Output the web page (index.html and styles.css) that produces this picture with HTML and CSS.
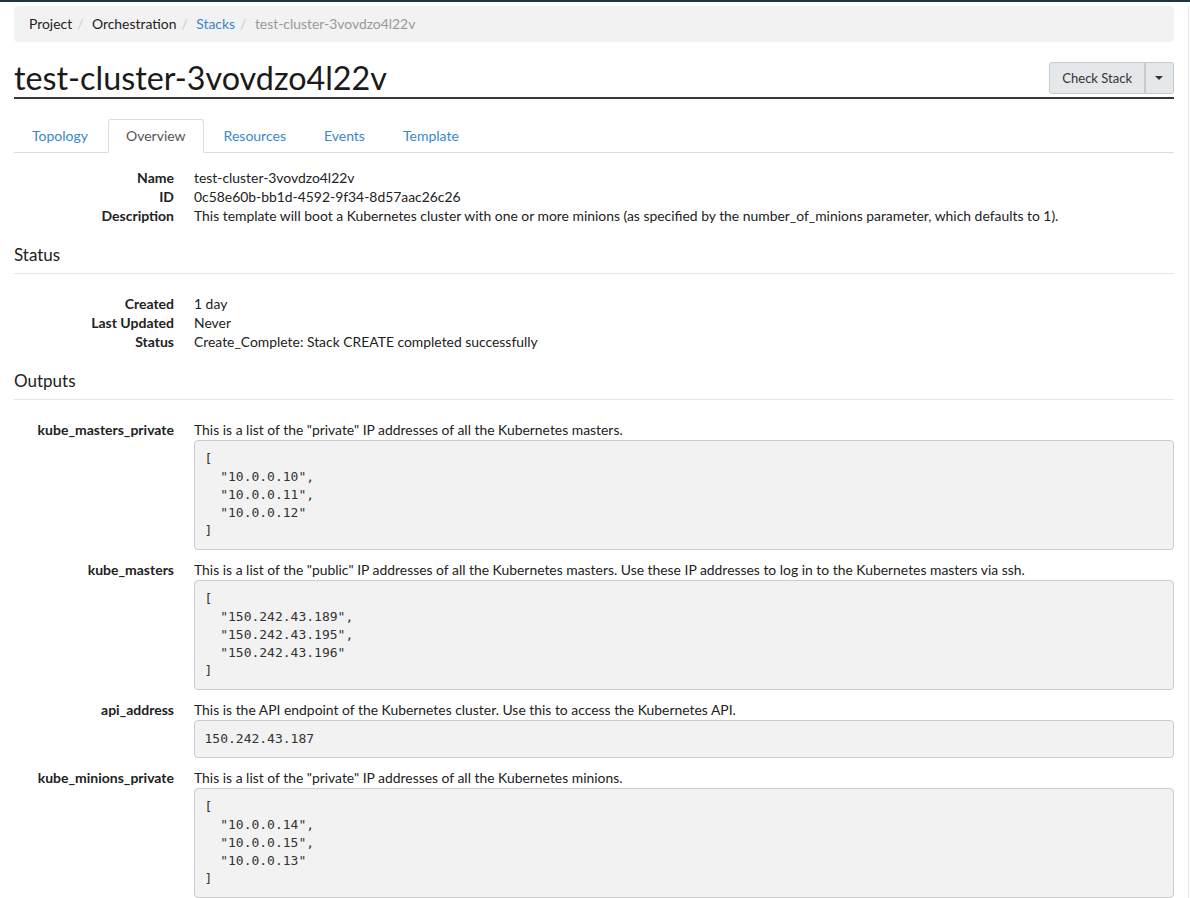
FILE: index.html
```html
<!DOCTYPE html>
<html lang="en">
<head>
<meta charset="utf-8">
<title>Stack Details - test-cluster-3vovdzo4l22v</title>
<link rel="stylesheet" href="styles.css">
</head>
<body>
<div class="topbar"></div>
<div class="page">
  <ol class="breadcrumb">
    <li>Project</li>
    <li>Orchestration</li>
    <li><a href="#">Stacks</a></li>
    <li class="active">test-cluster-3vovdzo4l22v</li>
  </ol>

  <div class="page-header">
    <h1 class="page-title">test-cluster-3vovdzo4l22v</h1>
    <div class="btn-group">
      <button class="btn btn-main" type="button">Check Stack</button>
      <button class="btn btn-toggle" type="button"><span class="caret"></span></button>
    </div>
  </div>

  <ul class="nav-tabs">
    <li><a href="#">Topology</a></li>
    <li class="active"><a href="#">Overview</a></li>
    <li><a href="#">Resources</a></li>
    <li><a href="#">Events</a></li>
    <li><a href="#">Template</a></li>
  </ul>

  <dl class="dl-horizontal overview">
    <dt>Name</dt>
    <dd>test-cluster-3vovdzo4l22v</dd>
    <dt>ID</dt>
    <dd>0c58e60b-bb1d-4592-9f34-8d57aac26c26</dd>
    <dt>Description</dt>
    <dd>This template will boot a Kubernetes cluster with one or more minions (as specified by the number_of_minions parameter, which defaults to 1).</dd>
  </dl>

  <h4 class="section-title">Status</h4>
  <dl class="dl-horizontal">
    <dt>Created</dt>
    <dd>1 day</dd>
    <dt>Last Updated</dt>
    <dd>Never</dd>
    <dt>Status</dt>
    <dd>Create_Complete: Stack CREATE completed successfully</dd>
  </dl>

  <h4 class="section-title">Outputs</h4>
  <dl class="dl-horizontal outputs">
    <dt>kube_masters_private</dt>
    <dd>
      <div class="out-desc">This is a list of the "private" IP addresses of all the Kubernetes masters.</div>
<pre>[
  "10.0.0.10",
  "10.0.0.11",
  "10.0.0.12"
]</pre>
    </dd>
    <dt>kube_masters</dt>
    <dd>
      <div class="out-desc">This is a list of the "public" IP addresses of all the Kubernetes masters. Use these IP addresses to log in to the Kubernetes masters via ssh.</div>
<pre>[
  "150.242.43.189",
  "150.242.43.195",
  "150.242.43.196"
]</pre>
    </dd>
    <dt>api_address</dt>
    <dd>
      <div class="out-desc">This is the API endpoint of the Kubernetes cluster. Use this to access the Kubernetes API.</div>
<pre>150.242.43.187</pre>
    </dd>
    <dt>kube_minions_private</dt>
    <dd>
      <div class="out-desc">This is a list of the "private" IP addresses of all the Kubernetes minions.</div>
<pre>[
  "10.0.0.14",
  "10.0.0.15",
  "10.0.0.13"
]</pre>
    </dd>
  </dl>
</div>
</body>
</html>
```
FILE: styles.css
```css
* {
  box-sizing: border-box;
}

html, body {
  margin: 0;
  padding: 0;
  background: #fff;
}

body {
  font-family: Lato, "Open Sans", "Liberation Sans", sans-serif;
  font-size: 13px;
  line-height: 19px;
  color: #222;
  overflow: hidden;
}

a {
  color: #3a87cd;
  text-decoration: none;
}

.topbar {
  height: 2px;
  background: #1c3540;
}

.page {
  width: 1189px;
  min-height: 896px;
  padding: 0 14px;
  border-right: 1px solid #e3e3e3;
}

/* breadcrumb */
.breadcrumb {
  list-style: none;
  margin: 4px 0 0;
  padding: 8px 15px;
  line-height: 20px;
  font-size: 13.9px;
  background: #f2f2f2;
  border-radius: 4px;
  display: flex;
  color: #222;
}

.breadcrumb li + li::before {
  content: "/\00a0";
  padding: 0 5px;
  color: #ccc;
}

.breadcrumb .active {
  color: #999;
}

/* page header */
.page-header {
  margin-top: 20px;
  padding-bottom: 3px;
  border-bottom: 2px solid #3b3530;
  display: flex;
  justify-content: space-between;
  align-items: flex-start;
}

.page-title {
  margin: 0;
  font-size: 32.3px;
  line-height: 32px;
  font-weight: 400;
  color: #1a1a1a;
}

.btn-group {
  display: flex;
}

.btn {
  font-family: inherit;
  font-size: 13px;
  line-height: 18px;
  height: 32px;
  color: #333;
  background: #e5e8eb;
  border: 1px solid #c8cacc;
  margin: 0;
  cursor: pointer;
}

.btn-main {
  padding: 6px 12px;
  border-radius: 3px 0 0 3px;
}

.btn-toggle {
  padding: 0 10px;
  border-left: 0;
  border-radius: 0 3px 3px 0;
  display: flex;
  align-items: center;
  box-shadow: inset 1px 0 0 #c8cacc;
}

.caret {
  display: inline-block;
  width: 0;
  height: 0;
  border-top: 4px solid #333;
  border-left: 4px solid transparent;
  border-right: 4px solid transparent;
}

/* tabs */
.nav-tabs {
  list-style: none;
  margin: 20px 0 0;
  padding: 0;
  display: flex;
  border-bottom: 1px solid #ddd;
  font-size: 14px;
}

.nav-tabs li {
  margin-bottom: -1px;
  margin-right: 2px;
}

.nav-tabs a {
  display: block;
  padding: 6px 17px 6px;
  line-height: 20px;
  border: 1px solid transparent;
  border-radius: 3px 3px 0 0;
}

.nav-tabs .active a {
  color: #555;
  background: #fff;
  border-color: #ddd;
  border-bottom-color: #fff;
}

/* description lists */
.dl-horizontal {
  display: grid;
  grid-template-columns: 160px 1fr;
  column-gap: 20px;
  margin: 0;
  font-size: 13.9px;
}

.dl-horizontal dt {
  font-size: 14px;
  font-weight: 700;
  text-align: right;
  white-space: nowrap;
}

.dl-horizontal dd {
  margin: 0;
}

.overview {
  margin-top: 15px;
}

.section-title {
  margin: 20px 0 20px;
  padding-bottom: 9px;
  font-size: 17px;
  line-height: 19px;
  font-weight: 400;
  color: #222;
  border-bottom: 1px solid #e6e6e6;
}

pre {
  margin: 1px 0 10px;
  padding: 9px 9.5px;
  font-family: "DejaVu Sans Mono", "Liberation Mono", monospace;
  font-size: 13px;
  line-height: 18px;
  color: #333;
  background: #f2f2f2;
  border: 1px solid #ccc;
  border-radius: 4px;
  white-space: pre;
}
```
